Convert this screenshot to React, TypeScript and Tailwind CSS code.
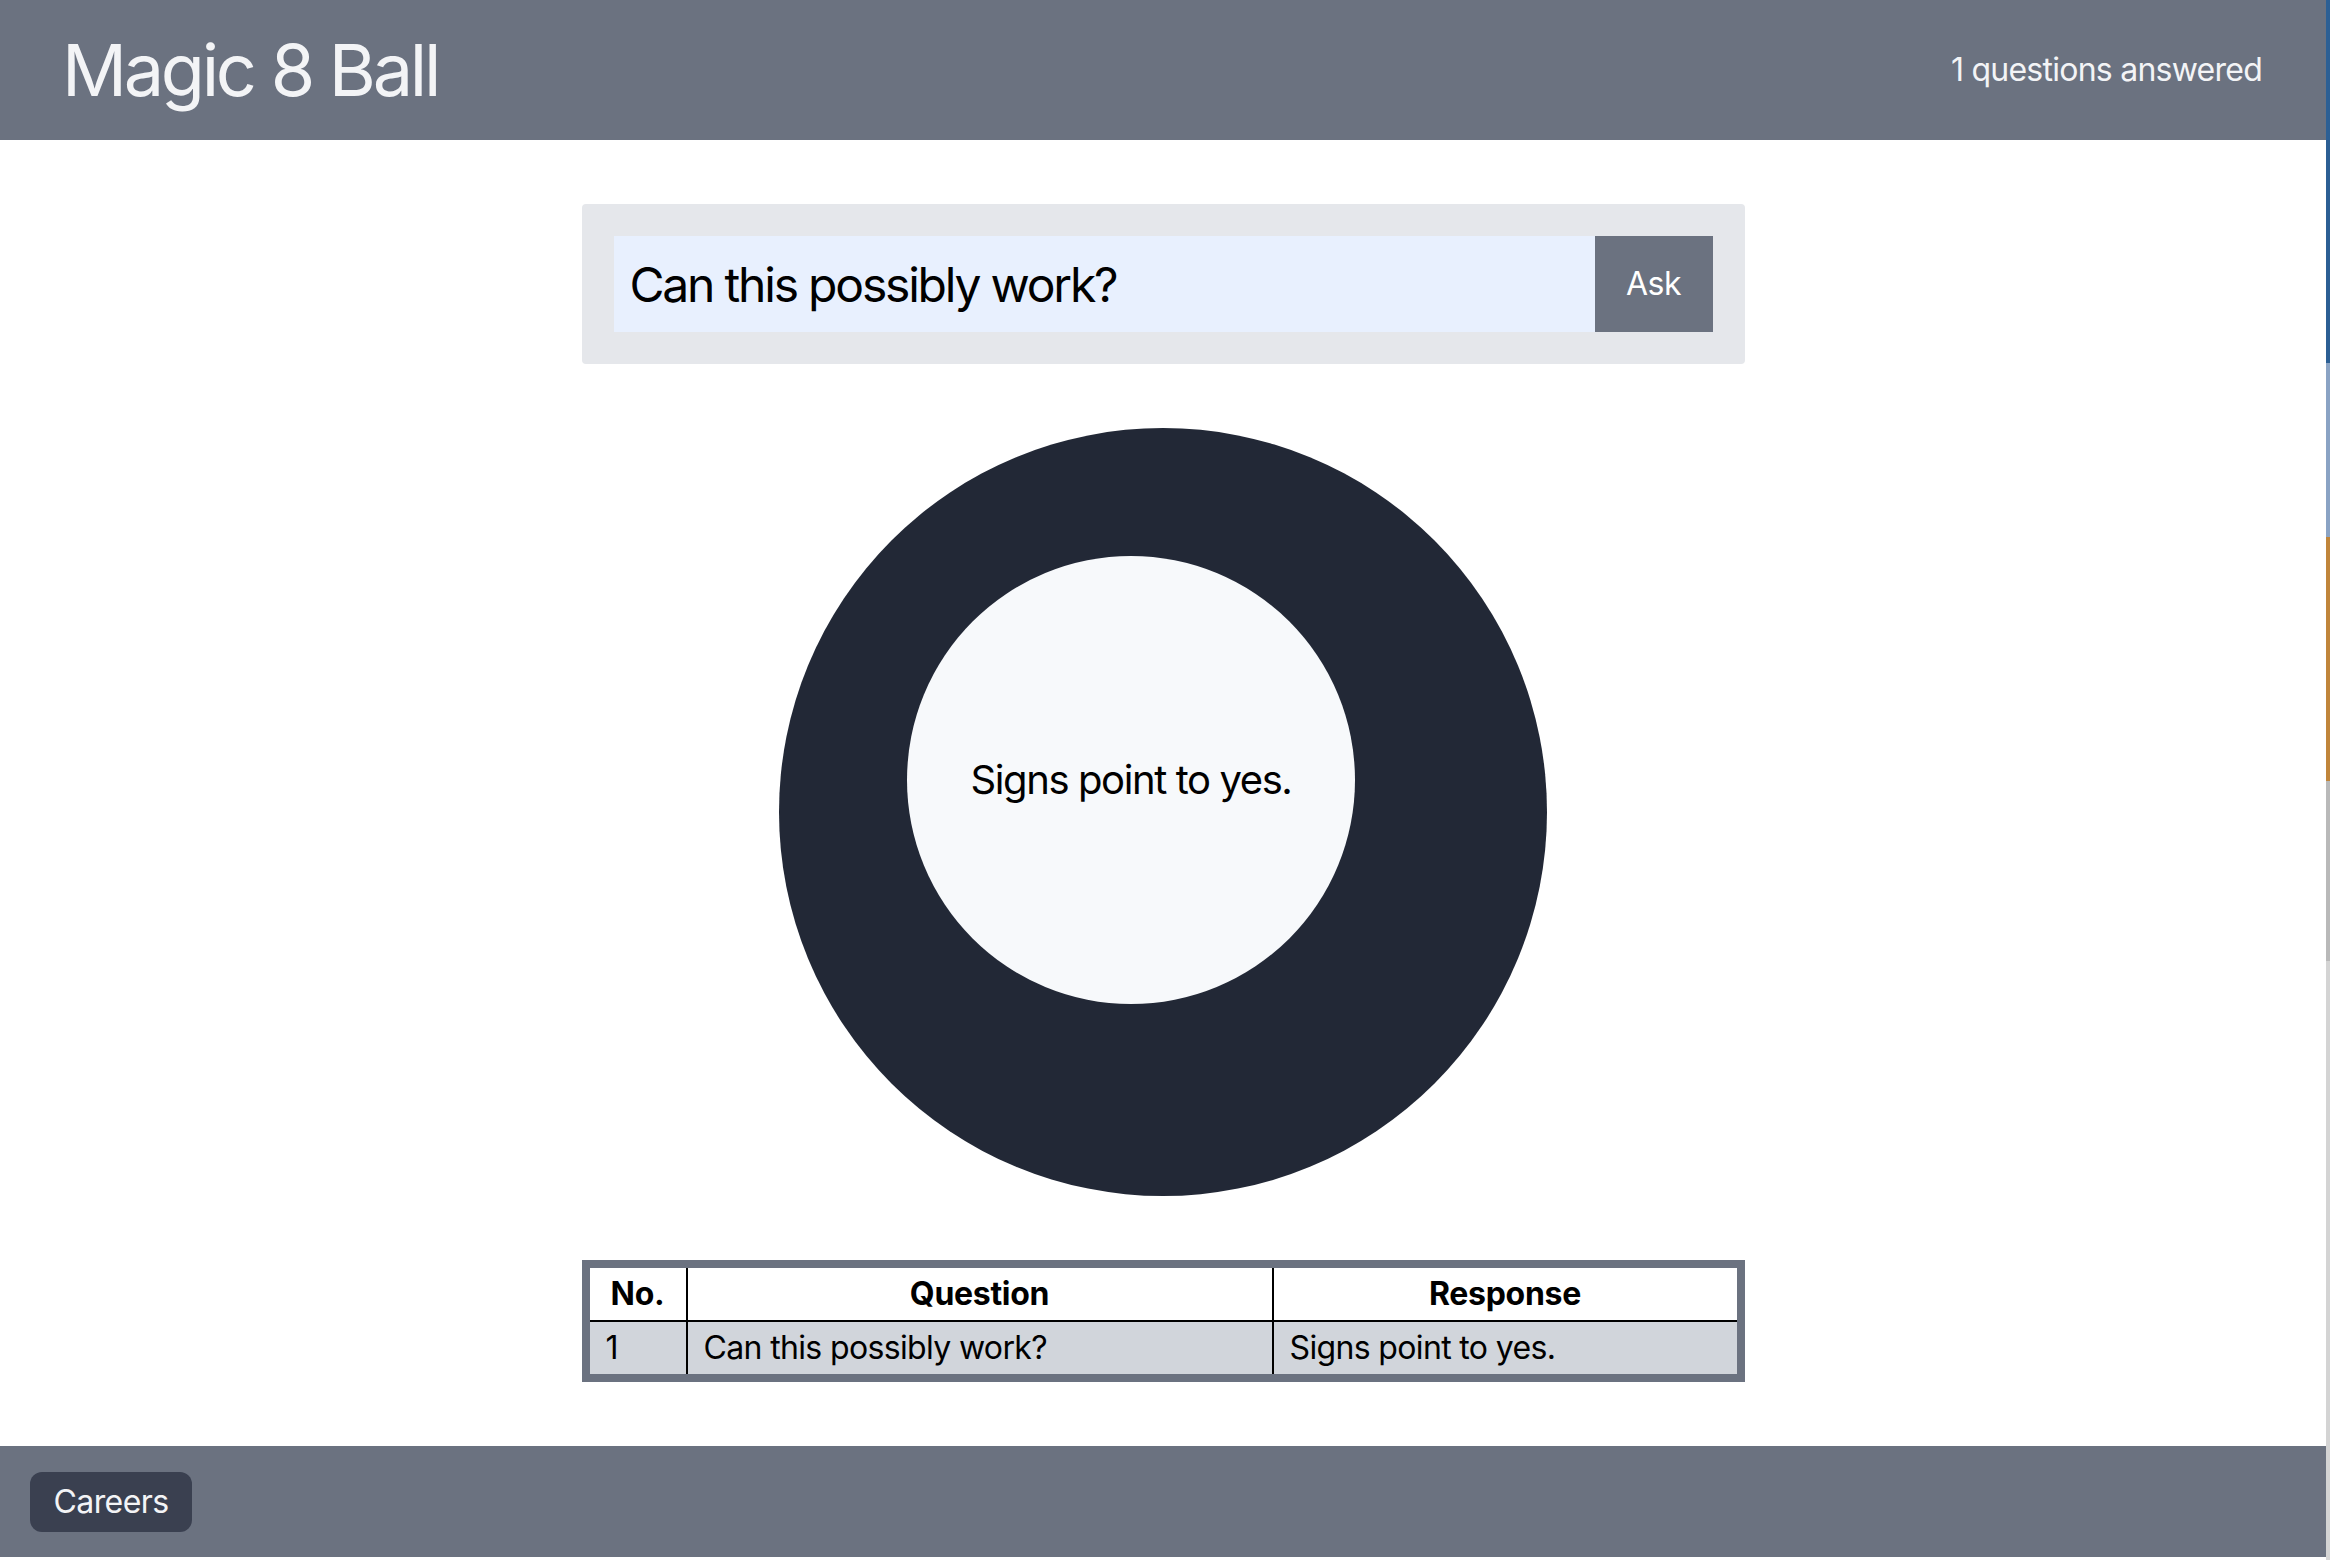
import React from "react";

export default function App() {
  return (
    <div
      className="flex w-[2330px] bg-white"
      style={{ fontFamily: "Inter, 'Noto Sans', 'Liberation Sans', sans-serif" }}
    >
      <div className="flex w-[2326px] flex-col bg-white">
        <header className="flex h-[140px] items-center justify-between bg-[#6b7280] px-[62px] text-[#f3f4f6]">
          <h1 className="text-[72px] leading-[80px] font-normal tracking-[-3.3px]">Magic 8 Ball</h1>
          <span className="pr-[2px] text-[32px] leading-[48px] tracking-[-0.75px]">1 questions answered</span>
        </header>

        <main className="flex flex-col items-center">
          <form className="mt-[64px] flex w-[1163px] rounded-[4px] bg-[#e5e7eb] p-[32px]">
            <input
              className="h-[96px] flex-1 bg-[#e8f0fe] pl-[16px] text-[48px] tracking-[-2.2px] text-black outline-none"
              defaultValue="Can this possibly work?"
              style={{ fontFamily: "Inter, 'Noto Sans', sans-serif" }}
            />
            <button
              type="button"
              className="h-[96px] w-[118px] bg-[#6b7280] text-[32px] tracking-[-0.5px] text-white"
            >
              Ask
            </button>
          </form>

          <div className="relative mt-[64px] h-[768px] w-[768px] rounded-full bg-[#222836]">
            <div className="absolute left-[128px] top-[128px] flex h-[448px] w-[448px] items-center justify-center rounded-full bg-[#f7f9fb]">
              <span className="text-[40px] leading-[56px] tracking-[-1.4px] text-black">Signs point to yes.</span>
            </div>
          </div>

          <div className="mt-[64px] w-[1163px] border-[8px] border-[#6b7280]">
            <table className="w-full border-collapse text-[32px] text-black">
              <thead>
                <tr className="h-[53px] bg-white">
                  <th className="w-[97px] border-b-[2px] border-r-[2px] border-black px-[16px] font-bold tracking-[-0.3px]">No.</th>
                  <th className="w-[586px] border-b-[2px] border-r-[2px] border-black px-[16px] font-bold tracking-[-0.3px]">Question</th>
                  <th className="border-b-[2px] border-black px-[16px] font-bold tracking-[-0.3px]">Response</th>
                </tr>
              </thead>
              <tbody>
                <tr className="h-[53px] bg-[#d1d5db] tracking-[-0.65px]">
                  <td className="border-r-[2px] border-black px-[16px] text-left">1</td>
                  <td className="border-r-[2px] border-black px-[16px] text-left">Can this possibly work?</td>
                  <td className="px-[16px] text-left">Signs point to yes.</td>
                </tr>
              </tbody>
            </table>
          </div>
        </main>

        <footer className="mt-[64px] flex bg-[#6b7280] pb-[25px] pl-[30px] pt-[26px]">
          <button
            type="button"
            className="h-[60px] w-[162px] rounded-[12px] bg-[#3a4050] text-[32px] tracking-[-0.6px] text-[#f3f4f6]"
          >
            Careers
          </button>
        </footer>
      </div>
      <div className="flex h-[1560px] w-[4px] flex-col">
        <div className="h-[363px] bg-[#2c5f94]" />
        <div className="h-[174px] bg-[#8aa3c4]" />
        <div className="h-[244px] bg-[#c0853a]" />
        <div className="h-[180px] bg-[#b9b9b9]" />
        <div className="flex-1 bg-[#d4d4d4]" />
      </div>
    </div>
  );
}
